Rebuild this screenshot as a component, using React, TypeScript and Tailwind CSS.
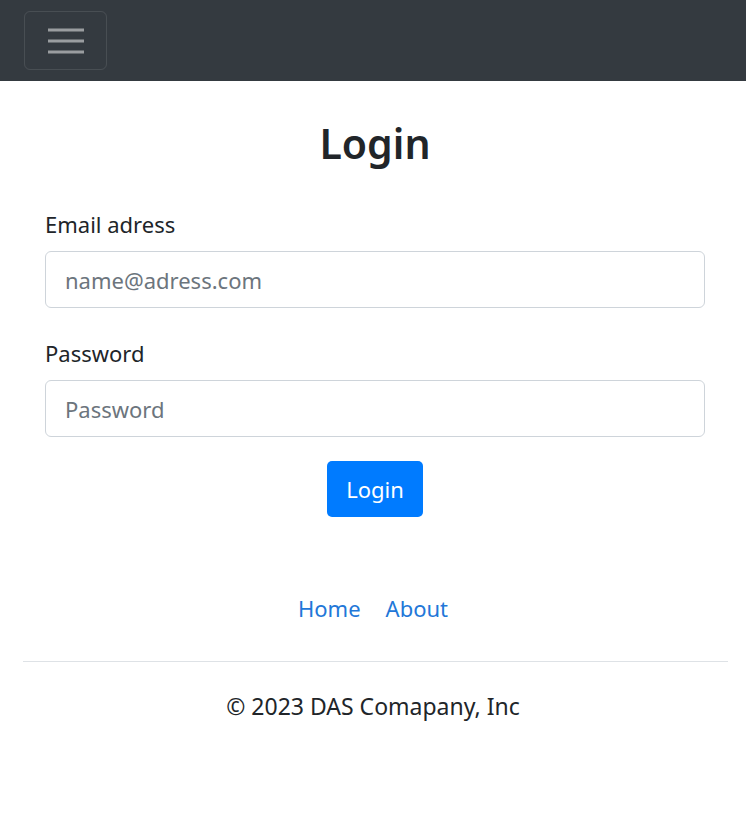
export default function App() {
  return (
    <div className="min-h-[833px] bg-white text-[#212529]" style={{ fontFamily: '"Noto Sans", "Open Sans", sans-serif' }}>
      {/* Navbar */}
      <nav className="h-[81px] bg-[#343a40] px-[24px] flex items-center">
        <button className="w-[83px] h-[59px] rounded-[6px] border border-white/10 flex items-center justify-center">
          <svg width="36" height="28" viewBox="0 0 36 28">
            <path d="M0 3h36M0 14h36M0 25h36" stroke="#9a9da0" strokeWidth="3" />
          </svg>
        </button>
      </nav>

      {/* Login form */}
      <main className="pl-[45px] pr-[41px]">
        <h1 className="text-center text-[41px] font-semibold leading-[1.2] pt-[38px] mb-[40px]">Login</h1>

        <div className="mb-[29px]">
          <label className="block text-[22px] leading-[1.5] mb-[10px]">Email adress</label>
          <input
            type="email"
            placeholder="name@adress.com"
            className="block w-full h-[57px] px-[19px] text-[22px] border border-[#ced4da] rounded-[6px] placeholder:text-[#6c757d] outline-none"
          />
        </div>

        <div className="mb-[24px]">
          <label className="block text-[22px] leading-[1.5] mb-[10px]">Password</label>
          <input
            type="password"
            placeholder="Password"
            className="block w-full h-[57px] px-[19px] text-[22px] border border-[#ced4da] rounded-[6px] placeholder:text-[#6c757d] outline-none"
          />
        </div>

        <div className="flex justify-center">
          <button className="w-[96px] h-[56px] bg-[#007bff] text-white text-[22px] rounded-[5px]">Login</button>
        </div>
      </main>

      {/* Footer */}
      <footer className="mt-[75px]">
        <ul className="flex justify-center gap-[25px] text-[22px] text-[#2277d8] leading-[1.5]">
          <li>Home</li>
          <li>About</li>
        </ul>
        <hr className="ml-[23px] mr-[18px] mt-[36px] border-t border-[#dee2e6]" />
        <p className="text-center text-[23px] leading-[1.5] mt-[27px]">© 2023 DAS Comapany, Inc</p>
      </footer>
    </div>
  );
}
